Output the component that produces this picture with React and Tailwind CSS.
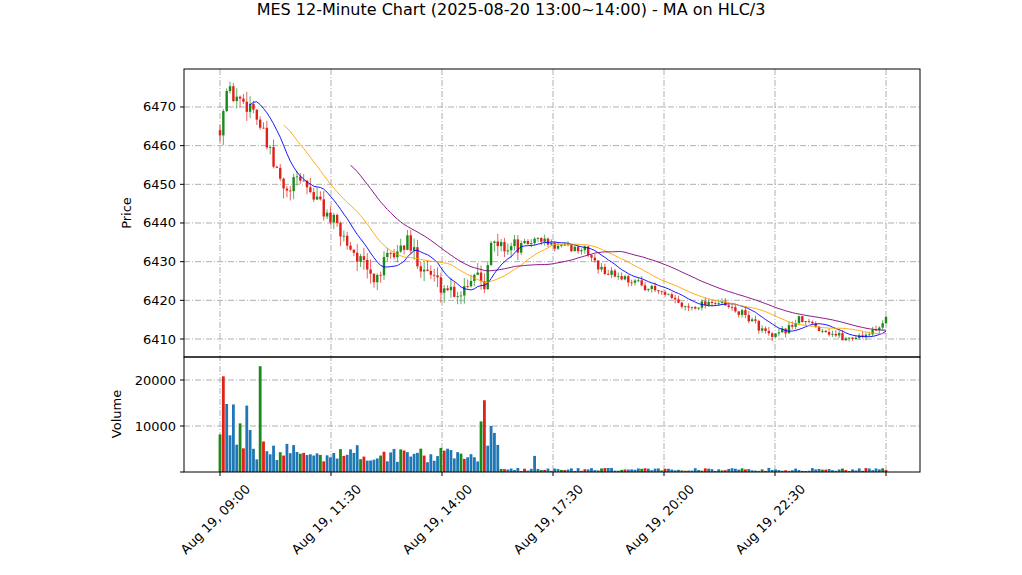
import React from "react";

function rng(seed){let s=seed;return()=>{s=(s*16807)%2147483647;return (s-1)/2147483646;};}
const keys=[[0,6465],[0.01,6474],[0.05,6470],[0.08,6455],[0.1,6447],[0.12,6452],[0.17,6440],[0.2,6433],[0.23,6425],[0.25,6430],[0.28,6435],[0.3,6430],[0.33,6424],[0.36,6422],[0.38,6427],[0.39,6428],[0.395,6423],[0.405,6434],[0.45,6434],[0.48,6436],[0.5,6434],[0.55,6433],[0.57,6428],[0.62,6425],[0.66,6422],[0.7,6418],[0.74,6420],[0.79,6416],[0.83,6410],[0.87,6415],[0.94,6410],[0.985,6412],[1,6416]];
function base(t){for(let i=1;i<keys.length;i++){if(t<=keys[i][0]){const[a,pa]=keys[i-1],[b,pb]=keys[i];return pa+(pb-pa)*(t-a)/(b-a);}}return 6416;}
const N=200,X0=220,X1=886;
const r=rng(42);
const bars=[];let prev=6464;
for(let i=0;i<N;i++){const t=i/(N-1);const amp=t<0.45?2.6:1.1;const c=base(t)+(r()-0.5)*amp*1.8;const o=prev;const h=Math.max(o,c)+r()*amp;const l=Math.min(o,c)-r()*amp;
const v=t<0.05?5000+r()*12000:t<0.4?2000+r()*5000*(1-t):t<0.42?3000+r()*10000:200+r()*700;
bars.push({o,h,l,c,v});prev=c;}
bars[12].v=23000;bars[1].v=20800;bars[79].v=15600;bars[78].v=11000;bars[94].v=3500;
const px=i=>X0+(X1-X0)*i/(N-1);
const py=p=>339-(p-6410)*3.867;
const vy=v=>472-v*0.0046;
function ma(w){const pts=[];for(let i=w-1;i<N;i++){let s=0;for(let j=i-w+1;j<=i;j++){const b=bars[j];s+=(b.h+b.l+b.c)/3;}pts.push(`${px(i).toFixed(1)},${py(s/w).toFixed(1)}`);}return pts.join(" ");}
const xt=[220,331,442,553,664,775,886];
const xl=["Aug 19, 09:00","Aug 19, 11:30","Aug 19, 14:00","Aug 19, 17:30","Aug 19, 20:00","Aug 19, 22:30"];
const F={fontFamily:"'DejaVu Sans',sans-serif"};

export default function App(){
  return (
    <div className="w-[1022px] h-[575px] bg-white relative" style={F}>
      <div className="text-center text-[16px] text-black leading-[20px]">MES 12-Minute Chart (2025-08-20 13:00~14:00) - MA on HLC/3</div>
      <svg width="1022" height="555" viewBox="0 20 1022 555" className="block">
        <defs>
          <clipPath id="cp"><rect x="184" y="69" width="736" height="288"/></clipPath>
          <clipPath id="cv"><rect x="184" y="357" width="736" height="115"/></clipPath>
        </defs>
        {xt.map(x=><g key={x}><line x1={x} x2={x} y1={69} y2={472} stroke="#b0b0b0" strokeDasharray="6 2 1 2"/></g>)}
        {[6410,6420,6430,6440,6450,6460,6470].map(p=><line key={p} x1={184} x2={920} y1={py(p)} y2={py(p)} stroke="#b0b0b0" strokeDasharray="6 2 1 2"/>)}
        {[10000,20000].map(v=><line key={v} x1={184} x2={920} y1={vy(v)} y2={vy(v)} stroke="#b0b0b0" strokeDasharray="6 2 1 2"/>)}
        <g clipPath="url(#cp)">
          {bars.map((b,i)=>{const col=b.c>=b.o?"#1a8a1a":"#e0201a";const x=px(i);return <g key={i}><line x1={x} x2={x} y1={py(b.h)} y2={py(b.l)} stroke={col} strokeWidth="0.7"/><rect x={x-1.2} width="2.4" y={py(Math.max(b.o,b.c))} height={Math.max(0.8,Math.abs(py(b.o)-py(b.c)))} fill={col}/></g>;})}
          <polyline points={ma(10)} fill="none" stroke="blue" strokeWidth="0.9"/>
          <polyline points={ma(20)} fill="none" stroke="orange" strokeWidth="0.9"/>
          <polyline points={ma(40)} fill="none" stroke="purple" strokeWidth="0.9"/>
        </g>
        <g clipPath="url(#cv)">
          {bars.map((b,i)=>{const x=px(i);const k=(i*7)%6;const col=k===0?"#1a8a1a":k===1?"#e0201a":"#1f77b4";return <rect key={i} x={x-1.4} width="2.8" y={vy(b.v)} height={472-vy(b.v)} fill={col}/>;})}
        </g>
        <rect x="184" y="69" width="736" height="288" fill="none" stroke="black" strokeWidth="1"/>
        <rect x="184" y="357" width="736" height="115" fill="none" stroke="black" strokeWidth="1"/>
        {[6410,6420,6430,6440,6450,6460,6470].map(p=><g key={p}><line x1={180} x2={184} y1={py(p)} y2={py(p)} stroke="black"/><text x={176} y={py(p)+4.5} textAnchor="end" fontSize="13" fill="black">{p}</text></g>)}
        {[[0,"0"],[10000,"10000"],[20000,"20000"]].map(([v,l])=><g key={v}><line x1={180} x2={184} y1={vy(v)} y2={vy(v)} stroke="black"/>{v>0&&<text x={176} y={vy(v)+4.5} textAnchor="end" fontSize="13" fill="black">{l}</text>}</g>)}
        <text x={131} y={213} transform="rotate(-90 131 213)" textAnchor="middle" fontSize="13" fill="black">Price</text>
        <text x={121} y={414} transform="rotate(-90 121 414)" textAnchor="middle" fontSize="13" fill="black">Volume</text>
        {xt.map((x,i)=><g key={x}><line x1={x} x2={x} y1={472} y2={476} stroke="black"/>{xl[i]&&<text x={x+31} y={490} transform={`rotate(-45 ${x+31} 490)`} textAnchor="end" fontSize="13" fill="black">{xl[i]}</text>}</g>)}
      </svg>
    </div>
  );
}
